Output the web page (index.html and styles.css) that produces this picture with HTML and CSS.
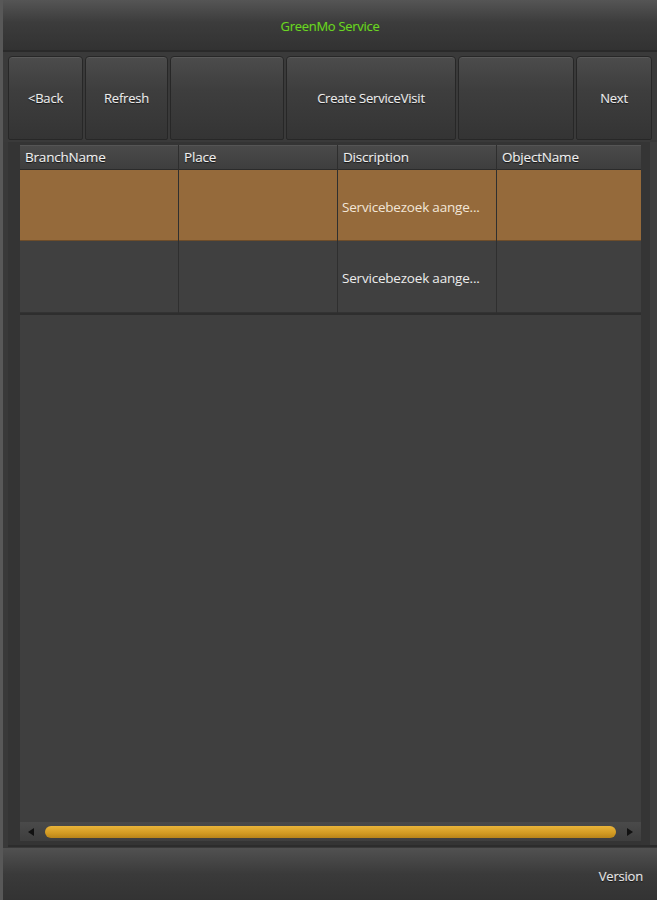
FILE: index.html
```html
<!DOCTYPE html>
<html lang="en">
<head>
    <meta charset="UTF-8">
    <meta name="viewport" content="width=device-width, initial-scale=1.0">
    <title>GreenMo Service</title>
    <link rel="stylesheet" href="styles.css">
</head>
<body>
    <div class="app">
        <div class="title-bar">GreenMo Service</div>

        <div class="toolbar">
            <button class="tool-btn">&lt;Back</button>
            <button class="tool-btn">Refresh</button>
            <button class="tool-btn"></button>
            <button class="tool-btn">Create ServiceVisit</button>
            <button class="tool-btn"></button>
            <button class="tool-btn">Next</button>
        </div>

        <div class="grid-panel">
            <div class="grid-wrap">
                <div class="grid">
                    <div class="head-cell">BranchName</div>
                    <div class="head-cell">Place</div>
                    <div class="head-cell">Discription</div>
                    <div class="head-cell">ObjectName</div>

                    <div class="cell selected"></div>
                    <div class="cell selected"></div>
                    <div class="cell selected">Servicebezoek aange...</div>
                    <div class="cell selected"></div>

                    <div class="cell"></div>
                    <div class="cell"></div>
                    <div class="cell">Servicebezoek aange...</div>
                    <div class="cell"></div>
                </div>
                <div class="grid-empty"></div>
                <div class="hscroll">
                    <span class="arrow arrow-left"></span>
                    <div class="thumb"></div>
                    <span class="arrow arrow-right"></span>
                </div>
            </div>
            <div class="vstrip"></div>
        </div>

        <div class="footer">Version</div>
    </div>
</body>
</html>
```

FILE: styles.css
```css
body {
    margin: 0;
    background: #3a3a3a;
    font-family: "Open Sans", "DejaVu Sans", sans-serif;
    font-size: 13px;
    color: #e8e8e8;
}
.app {
    width: 657px;
    height: 900px;
    display: flex;
    flex-direction: column;
    border-left: 3px solid #585858;
    box-sizing: border-box;
    background: #393939;
}
.title-bar {
    height: 52px;
    flex: none;
    display: flex;
    align-items: center;
    justify-content: center;
    padding-top: 1px;
    box-sizing: border-box;
    background: linear-gradient(#555555, #3c3c3c 45%, #323232);
    border-bottom: 2px solid #2a2a2a;
    color: #6cd428;
    font-size: 13px;
    letter-spacing: -0.3px;
    text-shadow: 0 0 1px #3c7a14;
}
.toolbar {
    height: 90px;
    flex: none;
    display: grid;
    grid-template-columns: 75px 83px 114px 170px 116px 76px;
    column-gap: 2px;
    padding: 4px 2px 2px 5px;
    box-sizing: border-box;
    background: #3a3a3a;
}
.tool-btn {
    border: 1px solid #272727;
    border-radius: 4px 4px 2px 2px;
    background: linear-gradient(#4c4c4c, #3e3e3e 40%, #343434);
    box-shadow: inset 0 1px 0 #5a5a5a;
    color: #ececec;
    font-family: inherit;
    font-size: 13px;
    letter-spacing: -0.2px;
    text-shadow: 0 1px 1px #111, 0 0 1px #999;
    padding: 0;
}
.grid-panel {
    flex: 1;
    display: flex;
    margin: 0 0 3px 5px;
    background: #343434;
    border-right: 7px solid #3f3f3f;
    box-shadow: 0 2px 0 #2c2c2c;
}
.grid-wrap {
    flex: 1;
    display: flex;
    flex-direction: column;
    padding: 3px 0 4px 12px;
}
.grid {
    display: grid;
    grid-template-columns: 158px 158px 158px 144px;
    grid-template-rows: 25px 71px 72px;
    column-gap: 1px;
    background: #404040;
    border-bottom: 2px solid #2e2e2e;
}
.head-cell {
    display: flex;
    align-items: center;
    padding-left: 5px;
    background: linear-gradient(#4a4a4a, #3e3e3e);
    border-bottom: 1px solid #2b2b2b;
    box-shadow: inset 0 1px 0 #555555, 1px 0 0 #2e2e2e;
    color: #f0f0f0;
    font-size: 13.5px;
    letter-spacing: -0.2px;
    text-shadow: 0 1px 1px #111, 0 0 1px #999;
}
.cell {
    display: flex;
    align-items: center;
    padding: 3px 0 0 4px;
    background: #404040;
    box-shadow: 1px 0 0 #2f2f2f;
    border-bottom: 1px solid #333333;
    font-size: 13.5px;
    letter-spacing: -0.2px;
    color: #ececec;
}
.cell.selected {
    background: #956a3b;
    border-bottom-color: #6e4d2a;
    color: #f2e6d8;
}
.grid-empty {
    flex: 1;
    background: #3f3f3f;
}
.hscroll {
    height: 19px;
    display: flex;
    align-items: center;
    gap: 11px;
    padding: 0 8px;
    background: linear-gradient(#4a4a4a, #3e3e3e);
}
.thumb {
    flex: 1;
    height: 12px;
    border-radius: 6px;
    background: linear-gradient(#e9b43a, #d29a22 60%, #b98419);
}
.arrow {
    width: 0;
    height: 0;
    border-top: 4px solid transparent;
    border-bottom: 4px solid transparent;
}
.arrow-left {
    border-right: 6px solid #111;
}
.arrow-right {
    border-left: 6px solid #111;
}
.vstrip {
    width: 9px;
    background: #353535;
}
.footer {
    height: 52px;
    flex: none;
    display: flex;
    align-items: center;
    justify-content: flex-end;
    padding: 4px 14px 0 0;
    box-sizing: border-box;
    background: linear-gradient(#515151, #3a3a3a 50%, #333333);
    color: #e6e6e6;
    font-size: 13px;
    letter-spacing: -0.2px;
    text-shadow: 0 1px 1px #111, 0 0 1px #999;
}
```
